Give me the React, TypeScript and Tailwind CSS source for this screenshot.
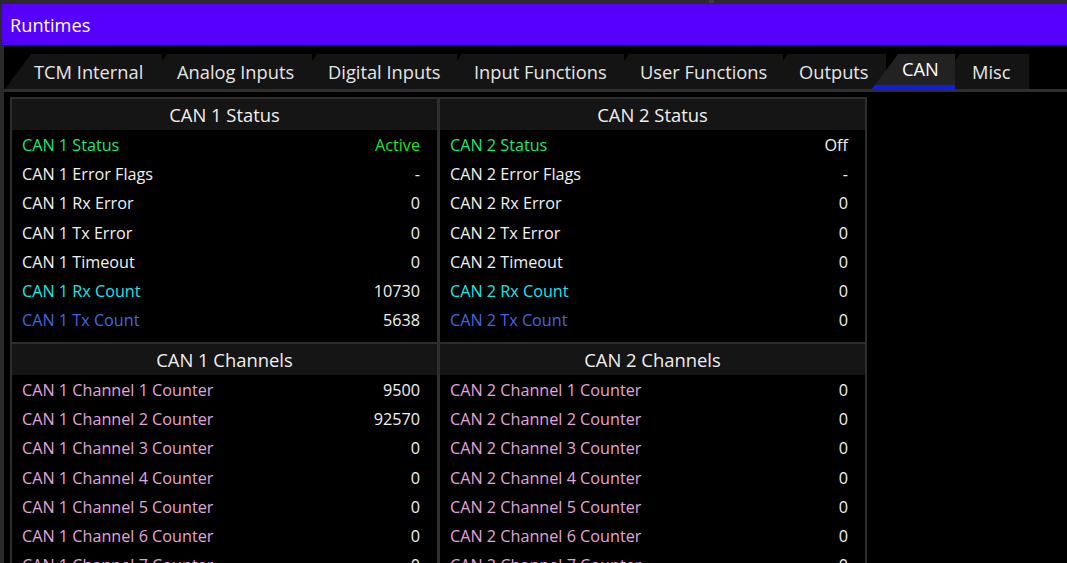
import React from 'react'

type Tab = {
  label: string
  className: string
  active?: boolean
}

type Row = {
  label: string
  value: string
  labelClass: string
  valueClass?: string
}

const tabs: Tab[] = [
  { label: 'TCM Internal', className: 'z-[8] ml-[1px] w-[157px] pl-[29px]' },
  { label: 'Analog Inputs', className: 'z-[7] -ml-[21px] w-[171px] pl-[36px]' },
  { label: 'Digital Inputs', className: 'z-[6] -ml-[21px] w-[166px] pl-[37px]' },
  { label: 'Input Functions', className: 'z-[5] -ml-[21px] w-[188px] pl-[38px]' },
  { label: 'User Functions', className: 'z-[4] -ml-[21px] w-[180px] pl-[37px]' },
  { label: 'Outputs', className: 'z-[3] -ml-[21px] w-[124px] pl-[37px]' },
  { label: 'CAN', className: 'z-[9] -ml-[14px] w-[83px] pl-[30px]', active: true },
  { label: 'Misc', className: 'z-[1] -ml-[21px] w-[95px] pl-[38px]' },
]

const statusRows = (n: number, status: string, statusClass: string, rx: string, tx: string): Row[] => [
  { label: `CAN ${n} Status`, value: status, labelClass: 'text-[#22e272]', valueClass: statusClass },
  { label: `CAN ${n} Error Flags`, value: '-', labelClass: 'text-[#f2f2f2]' },
  { label: `CAN ${n} Rx Error`, value: '0', labelClass: 'text-[#f2f2f2]' },
  { label: `CAN ${n} Tx Error`, value: '0', labelClass: 'text-[#f2f2f2]' },
  { label: `CAN ${n} Timeout`, value: '0', labelClass: 'text-[#f2f2f2]' },
  { label: `CAN ${n} Rx Count`, value: rx, labelClass: 'text-[#22e4e8]' },
  { label: `CAN ${n} Tx Count`, value: tx, labelClass: 'text-[#4466e2]' },
]

const channelRows = (n: number, values: string[]): Row[] =>
  values.map((value, i) => ({
    label: `CAN ${n} Channel ${i + 1} Counter`,
    value,
    labelClass: 'text-[#e4a4de]',
  }))

function DataRow({ row }: { row: Row }) {
  return (
    <div className="flex h-[29.2px] items-center justify-between pl-[10px] pr-[17px] pt-[1px] text-[16.2px] leading-none">
      <span className={row.labelClass}>{row.label}</span>
      <span className={row.valueClass ?? 'text-[#f2f2f2]'}>{row.value}</span>
    </div>
  )
}

function Section({ title, rows, className = '' }: { title: string; rows: Row[]; className?: string }) {
  return (
    <section className={`bg-black ${className}`}>
      <div className="flex h-[31px] items-center justify-center bg-[#151515] pt-[1px] text-[18.4px] leading-none text-[#f0f0f0]">
        {title}
      </div>
      {rows.map(row => (
        <DataRow key={row.label} row={row} />
      ))}
    </section>
  )
}

function Column({ n, status, statusClass, rx, tx, channels }: {
  n: number
  status: string
  statusClass: string
  rx: string
  tx: string
  channels: string[]
}) {
  return (
    <div className="flex flex-col gap-[2px]">
      <Section className="h-[243px]" title={`CAN ${n} Status`} rows={statusRows(n, status, statusClass, rx, tx)} />
      <Section title={`CAN ${n} Channels`} rows={channelRows(n, channels)} />
    </div>
  )
}

export default function App() {
  return (
    <div
      className="flex h-[563px] w-[1067px] flex-col overflow-hidden bg-black text-[#f2f2f2]"
      style={{ fontFamily: '"Open Sans", "Noto Sans", sans-serif' }}
    >
      <div className="relative h-[4px] shrink-0 bg-[#2a2a2a]">
        <div className="absolute left-[709px] top-0 h-[3px] w-[5px] bg-[#3c3c3c]" />
      </div>

      <div className="flex h-[41px] shrink-0">
        <div className="w-[2px] bg-[#2a2a2a]" />
        <div className="flex flex-1 items-center bg-[#5500ff] pl-[8px] pt-[1px] text-[18.2px] leading-none text-white">
          Runtimes
        </div>
      </div>

      <div className="flex min-h-0 flex-1">
        <div className="w-[4px] shrink-0 bg-[#2a2a2a]" />
        <div className="flex min-w-0 flex-1 flex-col pt-[9px]">
          <nav className="flex h-[35px] shrink-0">
            {tabs.map(tab => (
              <div
                key={tab.label}
                className={`relative flex h-full shrink-0 items-center whitespace-nowrap text-[18.3px] leading-none [clip-path:polygon(26px_0,100%_0,100%_100%,0_100%)] ${tab.className} ${
                  tab.active
                    ? 'border-b-[4px] border-[#0c1ee6] bg-[#222222] pb-[1px] text-white'
                    : 'bg-[#141414] pt-[2px] text-[#e6e6e6]'
                }`}
              >
                {tab.label}
              </div>
            ))}
          </nav>
          <div className="h-[3px] shrink-0 bg-[#2e2e2e]" />

          <div className="pl-[6px] pt-[5px]">
            <div className="grid w-[857px] grid-cols-2 gap-[3px] bg-[#2e2e2e] p-[2px]">
              <Column
                n={1}
                status="Active"
                statusClass="text-[#1fe02a]"
                rx="10730"
                tx="5638"
                channels={['9500', '92570', '0', '0', '0', '0', '0', '0']}
              />
              <Column
                n={2}
                status="Off"
                statusClass="text-[#f2f2f2]"
                rx="0"
                tx="0"
                channels={['0', '0', '0', '0', '0', '0', '0', '0']}
              />
            </div>
          </div>
        </div>
      </div>
    </div>
  )
}
